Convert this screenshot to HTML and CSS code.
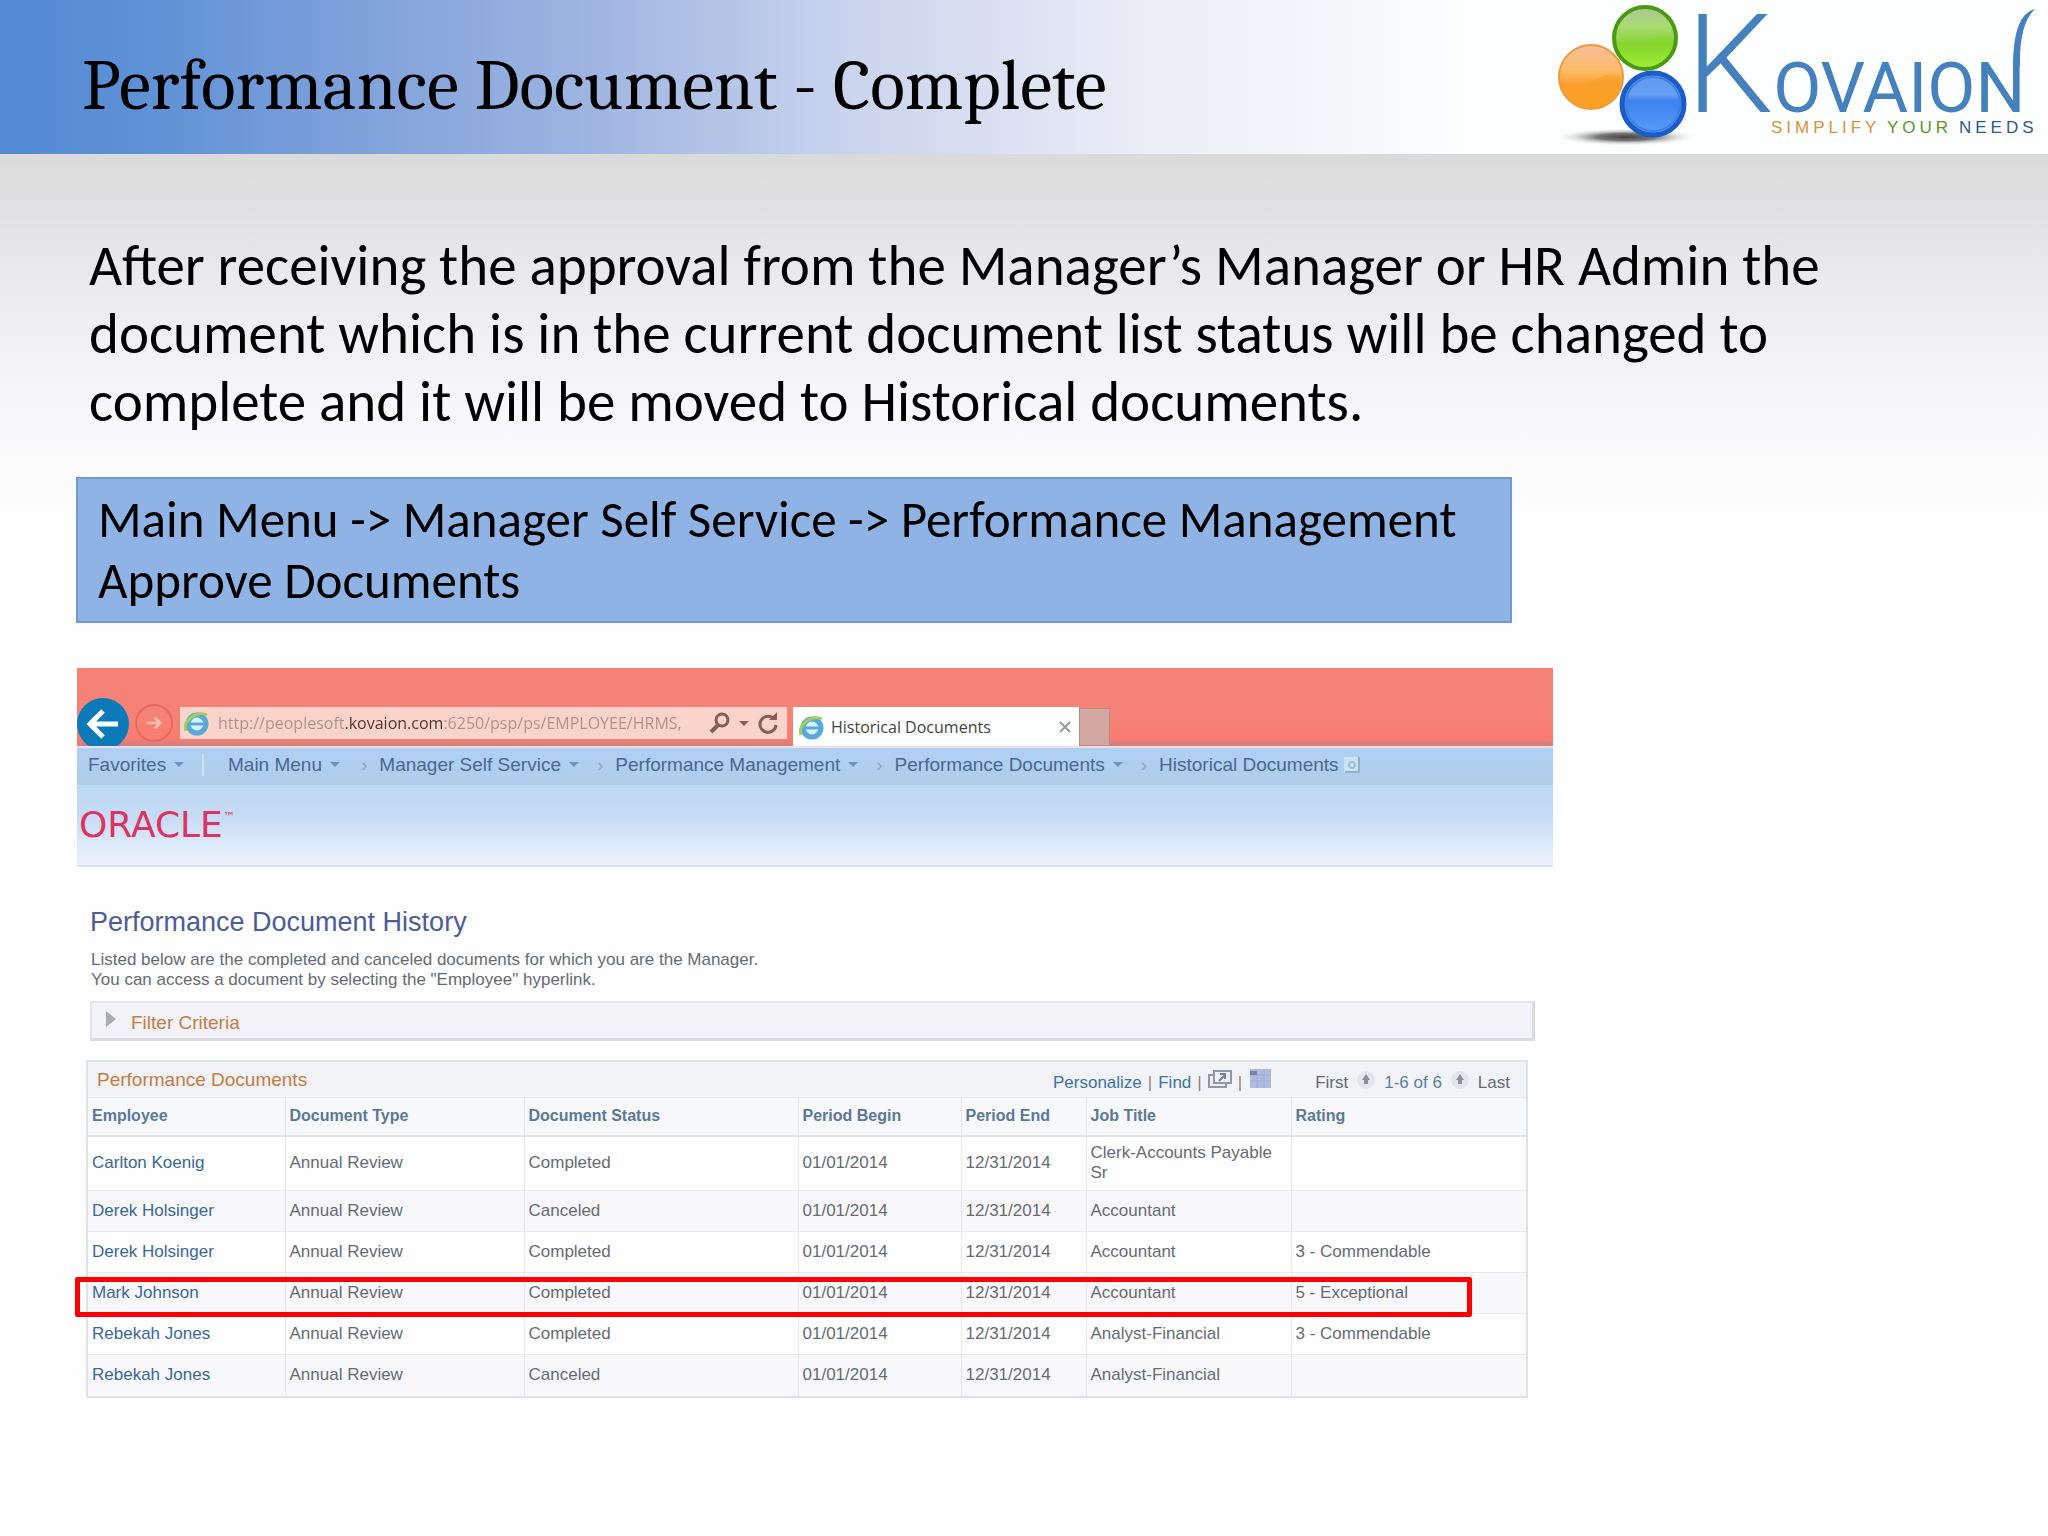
FILE: index.html
```html
<!DOCTYPE html>
<html lang="en">
<head>
  <meta charset="UTF-8" />
  <meta name="viewport" content="width=device-width, initial-scale=1.0"/>
  <title>Performance Document - Complete</title>
  <link rel="stylesheet" href="styles.css">
</head>
<body>

  <header class="slide-header">
    <h1>Performance Document - Complete</h1>
    <svg class="logo" viewBox="0 0 508 154" role="img" aria-label="Kovaion">
      <defs>
        <linearGradient id="green" x1="0" y1="0" x2="0" y2="1">
          <stop offset="0" stop-color="#a9c59a"/><stop offset=".3" stop-color="#a8dc72"/>
          <stop offset=".6" stop-color="#86d334"/><stop offset="1" stop-color="#b4fb4c"/>
        </linearGradient>
        <linearGradient id="orange" x1="0" y1="0" x2="0" y2="1">
          <stop offset="0" stop-color="#f6bd9c"/><stop offset=".4" stop-color="#fdbc68"/>
          <stop offset=".6" stop-color="#f9a136"/><stop offset="1" stop-color="#ffa726"/>
        </linearGradient>
        <linearGradient id="blue" x1="0" y1="0" x2="0" y2="1">
          <stop offset="0" stop-color="#5f9af0"/><stop offset=".35" stop-color="#66a0f5"/>
          <stop offset=".45" stop-color="#3d82ee"/><stop offset="1" stop-color="#5b9dff"/>
        </linearGradient>
        <radialGradient id="shadow">
          <stop offset="0" stop-color="#444"/><stop offset=".4" stop-color="#777"/>
          <stop offset="1" stop-color="#fff" stop-opacity="0"/>
        </radialGradient>
      </defs>
      <ellipse cx="86" cy="137" rx="72" ry="9" fill="url(#shadow)"/>
      <circle cx="51" cy="77" r="32" fill="url(#orange)" stroke="#ee9a3c" stroke-width="2"/>
      <path d="M22 82 Q40 88 54 80 T80 76 A29 29 0 0 1 22 82" fill="#fb9a1c" opacity=".4"/>
      <circle cx="105" cy="38" r="31" fill="url(#green)" stroke="#4c9a14" stroke-width="4"/>
      <path d="M78 42 Q94 50 108 42 T132 38 A27 27 0 0 1 78 42" fill="#7fdb1c" opacity=".4"/>
      <circle cx="113" cy="104" r="31" fill="url(#blue)" stroke="#1c5cc8" stroke-width="5"/>
      <circle cx="113" cy="104" r="27" fill="none" stroke="#3f80e2" stroke-width="2"/>
      <text class="wordmark" x="146" y="112"><tspan class="wordmark-k">K</tspan>OVAION</text>
      <path d="M480 66 Q479 24 495 9 Q473 14 473 66 Z" fill="#4580bf"/>
      <g class="tagline">
        <text x="231" y="133" fill="#d8943c">SIMPLIFY</text>
        <text x="347" y="133" fill="#5f9428">YOUR</text>
        <text x="419" y="133" fill="#2f5698">NEEDS</text>
      </g>
    </svg>
  </header>

  <main>
    <p class="intro">After receiving the approval from the Manager’s Manager or HR Admin the document which is in the current document list status will be changed to complete and it will be moved to Historical documents.</p>

    <div class="callout">Main Menu -&gt; Manager Self Service -&gt; Performance Management<br>Approve Documents</div>

    <section class="browser">
      <div class="chrome">
        <button class="back" aria-label="Back">
          <svg viewBox="0 0 52 52"><path d="M41 26H14M26 13L13 26l13 13" fill="none" stroke="#fff" stroke-width="5"/></svg>
        </button>
        <button class="forward" aria-label="Forward">
          <svg viewBox="0 0 38 38"><path d="M11 19h15M20 13l6 6-6 6" fill="none" stroke="#fbc0b4" stroke-width="3"/></svg>
        </button>
        <div class="address">
          <svg class="ie" viewBox="0 0 26 26"><circle cx="13" cy="14" r="9" fill="#d6effa" stroke="#58a9da" stroke-width="5"/><path d="M6 14h15" stroke="#58a9da" stroke-width="3"/><path d="M2 21C-2 10 14 0 23 5" fill="none" stroke="#a4d058" stroke-width="3"/></svg>
          <input class="url" type="text" aria-label="Address" value="http://peoplesoft.kovaion.com:6250/psp/ps/EMPLOYEE/HRMS,">
          <button class="tool" aria-label="Search"><svg viewBox="0 0 22 22"><circle cx="13" cy="8" r="6" fill="none" stroke="#8c5a56" stroke-width="3"/><path d="M9 13l-7 7" stroke="#8c5a56" stroke-width="4"/></svg></button>
          <span class="caret"></span>
          <button class="tool" aria-label="Refresh"><svg viewBox="0 0 22 22"><path d="M17 7a8 8 0 1 0 2 6" fill="none" stroke="#8c5a56" stroke-width="3"/><path d="M12 8h8V0z" fill="#8c5a56"/></svg></button>
        </div>
        <div class="tab">
          <svg class="ie" viewBox="0 0 26 26"><circle cx="13" cy="14" r="9" fill="#d6effa" stroke="#58a9da" stroke-width="5"/><path d="M6 14h15" stroke="#58a9da" stroke-width="3"/><path d="M2 21C-2 10 14 0 23 5" fill="none" stroke="#a4d058" stroke-width="3"/></svg>
          <span class="tab-title">Historical Documents</span>
          <button class="close" aria-label="Close tab"><svg viewBox="0 0 12 12"><path d="M1 1l10 10M11 1L1 11" stroke="#999" stroke-width="2"/></svg></button>
        </div>
        <button class="new-tab" aria-label="New tab"></button>
      </div>

      <nav class="crumbs">
        <a class="favorites" href="#">Favorites<i class="caret"></i></a>
        <a class="main-menu" href="#">Main Menu<i class="caret"></i></a>
        <a class="step" href="#">Manager Self Service<i class="caret"></i></a>
        <a class="step" href="#">Performance Management<i class="caret"></i></a>
        <a class="step" href="#">Performance Documents<i class="caret"></i></a>
        <a class="step" href="#">Historical Documents</a>
        <svg class="page-icon" viewBox="0 0 18 18"><rect x="1" y="1" width="15" height="15" fill="#c9e3f5"/><path d="M16 1v15H2" fill="none" stroke="#8fb0c8" stroke-width="2"/><circle cx="9" cy="9" r="3" fill="none" stroke="#9dbfd8" stroke-width="2"/></svg>
      </nav>

      <div class="brand">ORACLE<span class="tm">™</span></div>

      <div class="content">
        <h2>Performance Document History</h2>
        <p class="help">Listed below are the completed and canceled documents for which you are the Manager.<br>You can access a document by selecting the "Employee" hyperlink.</p>
        <button class="filter"><i class="arrow"></i>Filter Criteria</button>
      </div>

      <div class="grid">
        <div class="grid-bar">
          <h3>Performance Documents</h3>
          <div class="grid-tools">
            <a href="#">Personalize</a><span>|</span><a href="#">Find</a><span>|</span>
            <svg class="grid-icon" viewBox="0 0 24 20"><path d="M6 2h17v12H6zM6 6H1v12h17v-4" fill="#eef0f4" stroke="#8f97a8" stroke-width="2"/><path d="M11 12l6-6M12 5h5v5" fill="none" stroke="#77809a" stroke-width="2"/></svg>
            <span>|</span>
            <svg class="grid-icon" viewBox="0 0 24 20"><rect x="2" width="21" height="19" fill="#b0bbdd"/><path d="M2 6h21M2 12h21M9 0v19M16 0v19" stroke="#a0acd4"/><path d="M2 2h7v4H2z" fill="#7787b4"/></svg>
          </div>
          <div class="pager">
            <span>First</span>
            <svg viewBox="0 0 20 20"><circle cx="10" cy="10" r="9" fill="#e3e5e8"/><path d="M10 4l4 6h-2v4H8v-4H6z" fill="#8b9098"/></svg>
            <a href="#">1-6 of 6</a>
            <svg viewBox="0 0 20 20"><circle cx="10" cy="10" r="9" fill="#e3e5e8"/><path d="M10 4l4 6h-2v4H8v-4H6z" fill="#8b9098"/></svg>
            <span>Last</span>
          </div>
        </div>
        <table>
          <colgroup>
            <col class="c-employee"><col class="c-type"><col class="c-status"><col class="c-begin"><col class="c-end"><col class="c-job"><col>
          </colgroup>
          <thead>
            <tr><th>Employee</th><th>Document Type</th><th>Document Status</th><th>Period Begin</th><th>Period End</th><th>Job Title</th><th>Rating</th></tr>
          </thead>
          <tbody>
            <tr class="tall"><td><a href="#">Carlton Koenig</a></td><td>Annual Review</td><td>Completed</td><td>01/01/2014</td><td>12/31/2014</td><td>Clerk-Accounts Payable Sr</td><td></td></tr>
            <tr><td><a href="#">Derek Holsinger</a></td><td>Annual Review</td><td>Canceled</td><td>01/01/2014</td><td>12/31/2014</td><td>Accountant</td><td></td></tr>
            <tr><td><a href="#">Derek Holsinger</a></td><td>Annual Review</td><td>Completed</td><td>01/01/2014</td><td>12/31/2014</td><td>Accountant</td><td>3 - Commendable</td></tr>
            <tr class="marked"><td><a href="#">Mark Johnson</a></td><td>Annual Review</td><td>Completed</td><td>01/01/2014</td><td>12/31/2014</td><td>Accountant</td><td>5 - Exceptional</td></tr>
            <tr><td><a href="#">Rebekah Jones</a></td><td>Annual Review</td><td>Completed</td><td>01/01/2014</td><td>12/31/2014</td><td>Analyst-Financial</td><td>3 - Commendable</td></tr>
            <tr><td><a href="#">Rebekah Jones</a></td><td>Annual Review</td><td>Canceled</td><td>01/01/2014</td><td>12/31/2014</td><td>Analyst-Financial</td><td></td></tr>
          </tbody>
        </table>
      </div>
    </section>
  </main>

</body>
</html>
```
FILE: styles.css
```css
* { margin: 0; padding: 0; box-sizing: border-box; }

body {
  min-height: 100vh;
  font-family: Calibri, Lato, sans-serif;
  color: #000;
  background: linear-gradient(#dbdadb 154px, #e3e2e4 220px, #eeedf0 310px, #f8f7fa 410px, #fdfefd 520px);
}

a { color: inherit; text-decoration: none; }

button {
  border: none;
  background: none;
  font: inherit;
  cursor: pointer;
}

.slide-header {
  display: flex;
  align-items: center;
  justify-content: space-between;
  height: 154px;
  padding-left: 82px;
  background: linear-gradient(90deg, #548ad2 0%, #5b90d6 6%, #7b9fda 16%, #9fb5e1 29%, #c9d3ed 41%, #ebedf7 56%, #fdfefe 72%);
}

h1 {
  font-family: Cambria, "Liberation Serif", serif;
  font-size: 72px;
  font-weight: normal;
  padding-top: 16px;
}

.logo { width: 508px; height: 154px; }

.wordmark {
  font-family: Roboto, sans-serif;
  font-size: 70px;
  fill: #4580bf;
}

.wordmark-k { font-size: 138px; font-weight: 300; }
.tagline { font-family: "Liberation Sans", sans-serif; font-size: 17px; letter-spacing: 4px; }

main { padding: 78px 76px; }

.intro {
  max-width: 1780px;
  padding: 0 13px;
  font-size: 57px;
  line-height: 68px;
}

.callout {
  max-width: 1436px;
  margin-top: 41px;
  padding: 10px 20px;
  border: 2px solid #7199cd;
  background: #90b3e6;
  font-size: 51px;
  line-height: 61px;
}

/* Browser window */
.browser {
  max-width: 1477px;
  margin-top: 45px;
  padding-left: 1px;
  font-family: "Liberation Sans", sans-serif;
  font-size: 17px;
  color: #666b73;
}

.chrome {
  display: flex;
  align-items: flex-end;
  height: 80px;
  overflow: hidden;
  border-bottom: 2px solid #f5dbe2;
  background: linear-gradient(#f58276 60%, #fb7c70 90%, #cd8080);
}

.chrome button { flex: none; }

.back {
  width: 52px;
  height: 52px;
  margin-bottom: -4px;
  border-radius: 50%;
  background: #0c7ab8;
}

.forward {
  width: 38px;
  height: 38px;
  margin: 0 7px 4px 6px;
  border: 2px solid #e56a62;
  border-radius: 50%;
}

.address {
  display: flex;
  align-items: center;
  gap: 8px;
  width: 607px;
  height: 32px;
  margin: 0 6px 7px 0;
  padding: 0 8px 0 4px;
  background: #fad3ca;
  color: #8c5a56;
}

.ie { flex: none; width: 26px; height: 26px; }

/* the host name is darker than the rest of the address */
.url {
  flex: 1;
  min-width: 0;
  border: none;
  font-family: "Open Sans", sans-serif;
  font-size: 16px;
  color: transparent;
  background: linear-gradient(90deg, #b78c88 128px, #4a3434 128px, #4a3434 224px, #b78c88 224px);
  background-clip: text;
}

.tool { width: 22px; height: 22px; }
.tool svg, .close svg { display: block; }

.caret {
  display: inline-block;
  border: 5px solid transparent;
  border-top-color: currentColor;
  border-bottom: none;
}

.tab {
  display: flex;
  align-items: center;
  width: 286px;
  height: 39px;
  padding: 0 8px 0 6px;
  background: #fdfefe;
  font-family: "Open Sans", sans-serif;
  font-size: 16px;
  color: #444;
}

.tab-title { flex: 1; padding-left: 6px; }
.close { width: 12px; height: 12px; }

.new-tab {
  width: 31px;
  height: 38px;
  border: 1px solid #c08a84;
  background: #d3a8a0;
}

.crumbs {
  display: flex;
  align-items: center;
  height: 37px;
  padding: 0 0 4px 11px;
  background: linear-gradient(#aed0f4, #b0cde9);
  font-size: 19px;
  color: #4a6792;
}

.crumbs a { display: flex; align-items: center; white-space: nowrap; }
.crumbs .caret { margin-left: 8px; color: #7292bd; }
.favorites { width: 116px; border-right: 2px solid #cbe2f7; }
.main-menu { padding: 0 3px 0 24px; }

.step::before {
  content: "›";
  padding: 0 12px 0 18px;
  color: #8aa6c8;
}

.page-icon { width: 18px; height: 18px; margin-left: 4px; }

.brand {
  height: 82px;
  padding: 20px 0 0 2px;
  border-bottom: 2px solid #dcdfe4;
  background: linear-gradient(#bcdaf3, #c7dbf5 40%, #dcebfb 75%, #edf1f8);
  font-family: "DejaVu Sans", sans-serif;
  font-size: 36px;
  line-height: 40px;
  color: #de3260;
}

.tm { font-size: 12px; vertical-align: top; line-height: 24px; }

.content { padding: 36px 18px 19px 13px; }

h2 {
  font-size: 27px;
  font-weight: normal;
  line-height: 38px;
  color: #4e5c96;
}

.help {
  margin-top: 9px;
  padding-left: 1px;
  line-height: 20px;
}

.filter {
  display: flex;
  align-items: center;
  gap: 15px;
  width: 100%;
  height: 40px;
  margin-top: 11px;
  padding: 4px 0 0 14px;
  border: 2px solid #e3e5e9;
  border-bottom: 3px solid #d8dbe1;
  border-right: 3px solid #d8dbe1;
  background: #f3f3f7;
  font-size: 19px;
  color: #c47c46;
}

.arrow {
  margin-bottom: 8px;
  border: 8px solid transparent;
  border-left: 10px solid #a9adb3;
  border-right: none;
}

/* Results grid */
.grid {
  margin: 0 25px 0 9px;
  border: 2px solid #dfe2e7;
  background: #fefefe;
}

.grid-bar {
  display: flex;
  align-items: center;
  height: 35px;
  padding: 0 16px 0 9px;
  background: #f2f3f6;
}

h3 {
  flex: 1;
  font-size: 19px;
  font-weight: normal;
  color: #c47c46;
}

.grid-tools, .pager {
  display: flex;
  align-items: center;
  padding-top: 6px;
}

.grid-tools { gap: 6px; margin-right: 43px; color: #8c8478; }
.grid-tools a { color: #3e71a4; }
.grid-icon { width: 24px; height: 20px; margin-bottom: 8px; }
.pager { gap: 8px; }
.pager a { color: #5b7fa4; }
.pager svg { width: 20px; height: 20px; margin-bottom: 6px; }

table {
  width: 100%;
  table-layout: fixed;
  border-collapse: collapse;
}

.c-employee { width: 197px; }
.c-type { width: 239px; }
.c-status { width: 274px; }
.c-begin { width: 163px; }
.c-end { width: 125px; }
.c-job { width: 205px; }

th, td {
  height: 41px;
  padding: 0 4px;
  border-top: 1px solid #ebebee;
  border-left: 1px solid #e6e8ec;
  text-align: left;
  line-height: 20px;
}

th:first-child, td:first-child { border-left: none; }

th {
  height: 38px;
  background: #f6f8fa;
  border-bottom: 2px solid #e3e4e8;
  font-size: 16px;
  color: #5d7896;
}

td a { color: #3a6799; }
.tall td { height: 55px; }
tbody tr:nth-child(even) { background: #f8f8fa; }

/* red frame round the highlighted employee */
.marked { position: relative; }

.marked td:first-child::after {
  content: "";
  position: absolute;
  top: 4px;
  left: -13px;
  right: 54px;
  height: 40px;
  box-sizing: border-box;
  border: 5px solid #fd0000;
  border-radius: 2px;
}
```
